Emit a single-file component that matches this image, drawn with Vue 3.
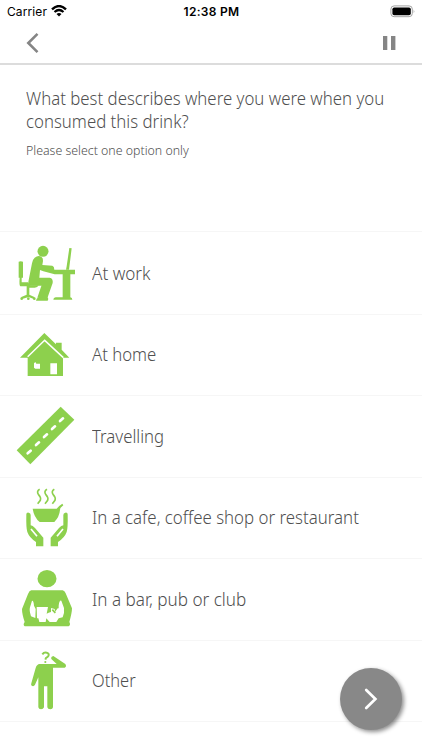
<template>
  <div class="screen">
    <div class="status">
      <div class="status__left">
        <span class="status__carrier">Carrier</span>
        <svg class="status__wifi" width="16" height="12" viewBox="0 0 16 12">
          <path d="M1 4.3 Q8 -2.1 15 4.3" fill="none" stroke="#000" stroke-width="2.4" />
          <path d="M3.5 7 Q8 3 12.5 7" fill="none" stroke="#000" stroke-width="2.2" />
          <path d="M5.5 9 Q8 6.9 10.5 9 L8 11.5 Z" fill="#000" />
        </svg>
      </div>
      <span class="status__time">12:38 PM</span>
      <svg class="status__battery" width="26" height="13" viewBox="0 0 26 13">
        <rect x="0.9" y="0.9" width="21.4" height="10.8" rx="3.2" fill="none" stroke="#a3a3a3" />
        <rect x="2.4" y="2.4" width="18.4" height="7.8" rx="1.8" fill="#000" />
        <path d="M23.7 4.4 Q25.2 6.3 23.7 8.2 Z" fill="#a3a3a3" />
      </svg>
    </div>

    <div class="nav">
      <button class="nav__btn" aria-label="Back">
        <svg width="14" height="22" viewBox="0 0 14 22">
          <path d="M11.5 1.8 L2.3 11 L11.5 20.2" fill="none" stroke="#858585" stroke-width="2.6" />
        </svg>
      </button>
      <button class="nav__btn" aria-label="Pause">
        <svg width="13" height="14" viewBox="0 0 13 14">
          <path d="M0 0H4.3V14H0Z M8 0H12.4V14H8Z" fill="#858585" />
        </svg>
      </button>
    </div>

    <div class="question">
      <h1 class="question__title">
        <span class="question__line">What best describes where you were when you</span>
        <span class="question__line">consumed this drink?</span>
      </h1>
      <p class="question__hint">Please select one option only</p>
    </div>

    <ul class="options">
      <li
        v-for="option in options"
        :key="option.id"
        class="option"
        @click="selected = option.id"
      >
        <svg class="option__icon" width="80" height="80" :viewBox="option.viewBox">
          <g v-if="option.id === 'work'">
            <circle cx="129" cy="79" r="16.5" />
            <path d="M104 98 Q114 90 124 95 Q130 99 129 108 L127 120 L157 122 Q163 124 163 134 H225 V148 H211 V217 Q217 218 217 224 H160 Q160 218 167 217 H188 V148 H164 L130 139 L120 135 L118 158 H149 Q160 160 158 174 L143 217 Q147 222 143 227 H108 Q108 221 116 217 L128 182 H89 Q83 178 86 166 L96 115 Q98 103 104 98 Z" />
            <path d="M56 110 Q62 107 69 110 V158 H56 Z M59 158 H65 V172 H84 L91 181 H116 Q113 188 104 188 H88 V209 L103 216 V223 L86 216 L64 223 V216 L80 209 V184 H61 Q57 180 59 158 Z" />
            <path d="M125 180 H140 L128 218 H112 Z" />
            <path d="M208 69 L215 70 L207 134 H198 L200 124 Z" />
            <circle cx="65" cy="221" r="4" />
            <circle cx="85" cy="221" r="4" />
            <circle cx="103" cy="221" r="4" />
          </g>
          <g v-else-if="option.id === 'home'">
            <path d="M133 54 L168 88 V83 H185 V104 L208 128 H189 V183 H83 V128 H60 Z" />
            <path d="M83 125 L134 76 L190 128" class="cut-line" />
            <path d="M102 145 L106 141 L109 146 H120 V161 H106 L102 158 Z M151 145 H171 V178 H151 Z" class="cut" />
          </g>
          <g v-else-if="option.id === 'travel'">
            <path d="M182 35 L223 74 L91 208 L50 166 Z" />
            <path d="M83 175 L92 167 M108 150 L117 142 M132 126 L141 118 M156 102 L165 94 M180 78 L189 70" class="cut-line cut-line--dash" />
          </g>
          <g v-else-if="option.id === 'cafe'">
            <path d="M119 43 Q109 49 115 58 Q124 67 121 76 L113 86 M141 43 Q131 49 137 58 Q146 67 143 76 L135 86 M163 43 Q153 49 159 58 Q168 67 165 76 L157 86" class="steam" />
            <path d="M98 101 H170 Q174 94 187 86 L190 91 Q180 98 180 105 Q178 126 163 141 H119 Q102 127 98 101 Z" />
            <path d="M79 118 Q79 112 86 113 Q92 114 92 120 V151 Q98 151 105 159 L130 188 V214 H108 V201 Q88 188 82 171 Q78 160 79 118 Z" />
            <path d="M203 118 Q203 112 196 113 Q190 114 190 120 V151 Q184 151 177 159 L152 188 V214 H174 V201 Q194 188 200 171 Q204 160 203 118 Z" />
            <path d="M93 162 L111 184 M189 162 L171 184" class="cut-line cut-line--thin" />
          </g>
          <g v-else-if="option.id === 'bar'">
            <ellipse cx="141" cy="62" rx="28.5" ry="26" />
            <path d="M94 97 H188 Q194 99 197 106 L216 151 Q216 164 208 192 Q213 200 206 205 H74 Q68 200 74 192 Q66 168 66 153 L84 108 Q88 98 94 97 Z" />
            <path d="M96 128 Q101 127 102 143 L107 153 L106 180 L93 175 Q87 157 90 148 Z M110 147 H144 L140 167 Q145 164 153 162 V150 L164 153 L165 162 L173 151 Q177 153 176 143 Q178 126 184 128 L192 150 Q194 165 188 178 L176 181 L169 192 H149 L139 181 L137 192 H118 L115 181 L111 181 Z" class="cut" />
            <path d="M157 155 L166 165" class="stroke" />
          </g>
          <g v-else>
            <path d="M127 43 Q132 36 140 38 Q149 41 145 48 Q143 51 138 54 L136 59" class="mark" />
            <circle cx="136" cy="66" r="3.2" />
            <path d="M119 72 H170 L154 57 Q152 50 160 48 L196 72 Q201 80 194 83 H159 V202 Q158 208 151 208 Q143 208 142 202 V139 H132 V202 Q130 208 123 208 Q116 208 115 202 V112 L105 134 Q101 141 95 137 Q92 134 94 130 L107 84 Q110 73 119 72 Z" />
          </g>
        </svg>
        <span class="option__label" :class="'option__label--' + option.id">{{ option.label }}</span>
      </li>
    </ul>

    <button class="next" aria-label="Next">
      <svg width="14" height="22" viewBox="0 0 14 22">
        <path d="M2.2 2 L11.4 11 L2.2 20" fill="none" stroke="#fff" stroke-width="2.7" stroke-linecap="round" />
      </svg>
    </button>
  </div>
</template>

<script setup>
import { ref } from 'vue'

const selected = ref(null)

const options = [
  { id: 'work', label: 'At work', viewBox: '0 21 240 240' },
  { id: 'home', label: 'At home', viewBox: '0 0 240 240' },
  { id: 'travel', label: 'Travelling', viewBox: '0 3 240 240' },
  { id: 'cafe', label: 'In a cafe, coffee shop or restaurant', viewBox: '0 9 240 240' },
  { id: 'bar', label: 'In a bar, pub or club', viewBox: '0 3 240 240' },
  { id: 'other', label: 'Other', viewBox: '0 3 240 240' }
]
</script>

<style>
body {
  margin: 0;
  background: #fff;
}
</style>

<style scoped>
.screen {
  position: relative;
  height: 750px;
  overflow: hidden;
  background: #fff;
  color: #505050;
  font-family: 'Noto Sans', sans-serif;
  font-weight: 300;
}
.status {
  display: grid;
  grid-template-columns: 1fr auto 1fr;
  align-items: center;
  height: 22px;
  padding: 0 6px 0 7px;
  color: #000;
  font-family: Inter, sans-serif;
}
.status__left {
  display: flex;
  align-items: center;
  gap: 4px;
}
.status__carrier {
  font-size: 12px;
  font-weight: 400;
  letter-spacing: 0.1px;
}
.status__time {
  font-size: 12px;
  font-weight: 600;
  letter-spacing: 0.3px;
}
.status__battery {
  justify-self: end;
}
.nav {
  display: flex;
  justify-content: space-between;
  align-items: center;
  box-sizing: border-box;
  height: 43px;
  padding: 0 26px;
  border-bottom: 2px solid #dcdcdc;
}
.nav__btn {
  display: flex;
  padding: 0;
  border: none;
  background: none;
}
.question {
  box-sizing: border-box;
  height: 166px;
  padding: 22px 26px 0;
}
.question__title {
  margin: 0;
  font-size: 18px;
  font-weight: 300;
  line-height: 23px;
}
.question__line {
  display: block;
  width: max-content;
  transform: scaleX(0.934);
  transform-origin: 0 50%;
}
.question__hint {
  width: max-content;
  margin: 8px 0 0;
  font-size: 13px;
  line-height: 18px;
  transform: scaleX(0.951);
  transform-origin: 0 50%;
}
.options {
  display: grid;
  grid-template-rows: 83px 81px 82px 81px 82px 81px;
  margin: 0;
  padding: 0;
  border-bottom: 1px solid #f6f6f6;
  list-style: none;
}
.option {
  display: flex;
  align-items: center;
  gap: 12px;
  border-top: 1px solid #f6f6f6;
}
.option__icon {
  align-self: flex-start;
  flex: none;
  fill: #8dd04d;
}
.cut {
  fill: #fff;
}
.cut-line {
  fill: none;
  stroke: #fff;
  stroke-width: 4.5;
}
.cut-line--dash {
  stroke-width: 8;
  stroke-linecap: round;
}
.cut-line--thin {
  stroke-width: 5;
}
.steam,
.stroke {
  fill: none;
  stroke: #8dd04d;
  stroke-width: 5;
}
.mark {
  fill: none;
  stroke: #8dd04d;
  stroke-width: 6;
}
.option__label {
  padding-bottom: 2px;
  font-size: 18px;
  line-height: 24px;
  white-space: nowrap;
  transform: scaleX(0.93);
  transform-origin: 0 50%;
}
.option__label--work {
  padding-bottom: 0;
  transform: scaleX(0.95);
}
.option__label--cafe {
  transform: scaleX(0.936);
}
.option__label--bar {
  transform: scaleX(0.95);
}
.option__label--other {
  transform: scaleX(0.915);
}
.next {
  position: absolute;
  right: 20px;
  bottom: 20px;
  display: flex;
  align-items: center;
  justify-content: center;
  width: 62px;
  height: 62px;
  padding: 0;
  border: none;
  border-radius: 50%;
  background: #888;
  box-shadow: 2px 2px 4px rgba(0, 0, 0, 0.45);
}
</style>
